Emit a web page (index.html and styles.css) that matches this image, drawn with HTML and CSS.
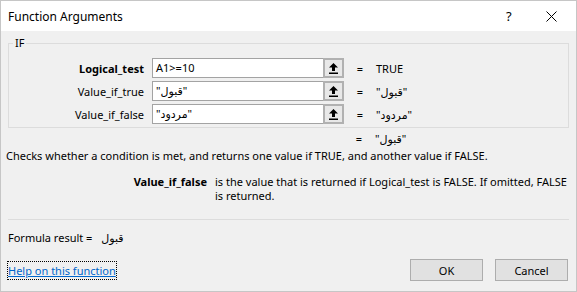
FILE: index.html
```html
<!DOCTYPE html>
<html lang="en">
<head>
    <meta charset="UTF-8">
    <title>Function Arguments</title>
    <link rel="stylesheet" href="styles.css">
</head>
<body>
    <div class="dialog">
        <div class="titlebar">
            <span class="title">Function Arguments</span>
            <span class="title-help">?</span>
            <span class="title-close">
                <svg width="11" height="11" viewBox="0 0 11 11"><path d="M0.5 0.5 L10.5 10.5 M10.5 0.5 L0.5 10.5" stroke="#000" stroke-width="1"/></svg>
            </span>
        </div>

        <div class="content">
            <div class="group">
                <span class="group-title">IF</span>
                <div class="args">
                    <label class="arg-label bold">Logical_test</label>
                    <div class="field"><span class="field-text">A1&gt;=10</span><span class="ref-btn"><svg width="9" height="11" viewBox="0 0 9 11"><path d="M4.5 0 L9 4.5 H6 V8 H3 V4.5 H0 Z" fill="#000"/><rect x="0" y="9.5" width="9" height="1.5" fill="#000"/></svg></span></div>
                    <span class="eq">=</span>
                    <span class="arg-value">TRUE</span>

                    <label class="arg-label">Value_if_true</label>
                    <div class="field"><span class="field-text">"قبول"</span><span class="ref-btn"><svg width="9" height="11" viewBox="0 0 9 11"><path d="M4.5 0 L9 4.5 H6 V8 H3 V4.5 H0 Z" fill="#000"/><rect x="0" y="9.5" width="9" height="1.5" fill="#000"/></svg></span></div>
                    <span class="eq">=</span>
                    <span class="arg-value">"قبول"</span>

                    <label class="arg-label">Value_if_false</label>
                    <div class="field"><span class="field-text">"مردود"</span><span class="ref-btn"><svg width="9" height="11" viewBox="0 0 9 11"><path d="M4.5 0 L9 4.5 H6 V8 H3 V4.5 H0 Z" fill="#000"/><rect x="0" y="9.5" width="9" height="1.5" fill="#000"/></svg></span></div>
                    <span class="eq">=</span>
                    <span class="arg-value">"مردود"</span>
                </div>
            </div>

            <div class="total">
                <span class="eq">=</span>
                <span class="arg-value">"قبول"</span>
            </div>

            <p class="summary">Checks whether a condition is met, and returns one value if TRUE, and another value if FALSE.</p>

            <div class="arg-help">
                <span class="arg-help-name">Value_if_false</span>
                <span class="arg-help-text">is the value that is returned if Logical_test is FALSE. If omitted, FALSE is returned.</span>
            </div>

            <div class="separator"></div>

            <div class="formula">Formula result = <span class="formula-value">قبول</span></div>

            <div class="footer">
                <a href="#" class="help-link">Help on this function</a>
                <div class="buttons">
                    <button class="btn">OK</button>
                    <button class="btn">Cancel</button>
                </div>
            </div>
        </div>
    </div>
</body>
</html>
```

FILE: styles.css
```css
body { margin: 0; font-family: "Noto Sans", "DejaVu Sans", sans-serif; font-size: 11px; color: #000; }
.dialog { width: 577px; height: 292px; box-sizing: border-box; border: 1px solid #c6c6c6; background-color: #f0f0f0; display: flex; flex-direction: column; }

.titlebar { height: 30px; background-color: #fff; display: flex; align-items: center; padding-left: 7px; }
.title { flex: 1; font-size: 12px; }
.title-help { width: 20px; font-size: 13px; margin-right: 20px; }
.title-close { width: 30px; display: flex; }

.content { flex: 1; padding: 0 7px; display: flex; flex-direction: column; }

.group { position: relative; border: 1px solid #dcdcdc; margin-top: 12px; padding: 14px 0 3px; }
.group-title { position: absolute; top: -9px; left: 4px; padding: 0 2px; background-color: #f0f0f0; line-height: 16px; }

.args { display: grid; grid-template-columns: 135px 192px 16px auto; column-gap: 8px; row-gap: 3px; align-items: center; }
.arg-label { text-align: right; }
.bold { font-weight: bold; }
.field { height: 20px; box-sizing: border-box; border: 1px solid #a3a3a3; background-color: #fff; display: flex; }
.field-text { flex: 1; padding-left: 3px; line-height: 18px; }
.ref-btn { width: 21px; box-sizing: border-box; border: 2px solid #b1b1b1; background-color: #e8e8e8; display: flex; align-items: center; justify-content: center; margin: -1px -1px -1px 0; height: 20px; }
.eq { text-align: center; }

.total { display: grid; grid-template-columns: 135px 192px 16px auto; column-gap: 8px; margin-top: 3px; }
.total .eq { grid-column: 3; }

.summary { margin: 2px 0 0 -2px; }

.arg-help { display: flex; margin-top: 12px; line-height: 14px; }
.arg-help-name { width: 199px; text-align: right; font-weight: bold; flex-shrink: 0; }
.arg-help-text { margin-left: 8px; }

.separator { height: 1px; background-color: #dcdcdc; margin-top: 16px; }

.formula { margin-top: 10px; }
.formula-value { margin-left: 6px; }

.footer { display: flex; justify-content: space-between; align-items: center; margin-top: 14px; }
.help-link { color: #0066cc; outline: 1px dotted #000; padding: 1px 0; }
.buttons { display: flex; gap: 12px; margin-right: 1px; }
.btn { width: 73px; height: 22px; border: 1px solid #adadad; background-color: #e1e1e1; font-family: inherit; font-size: 11px; padding: 0; }
```
